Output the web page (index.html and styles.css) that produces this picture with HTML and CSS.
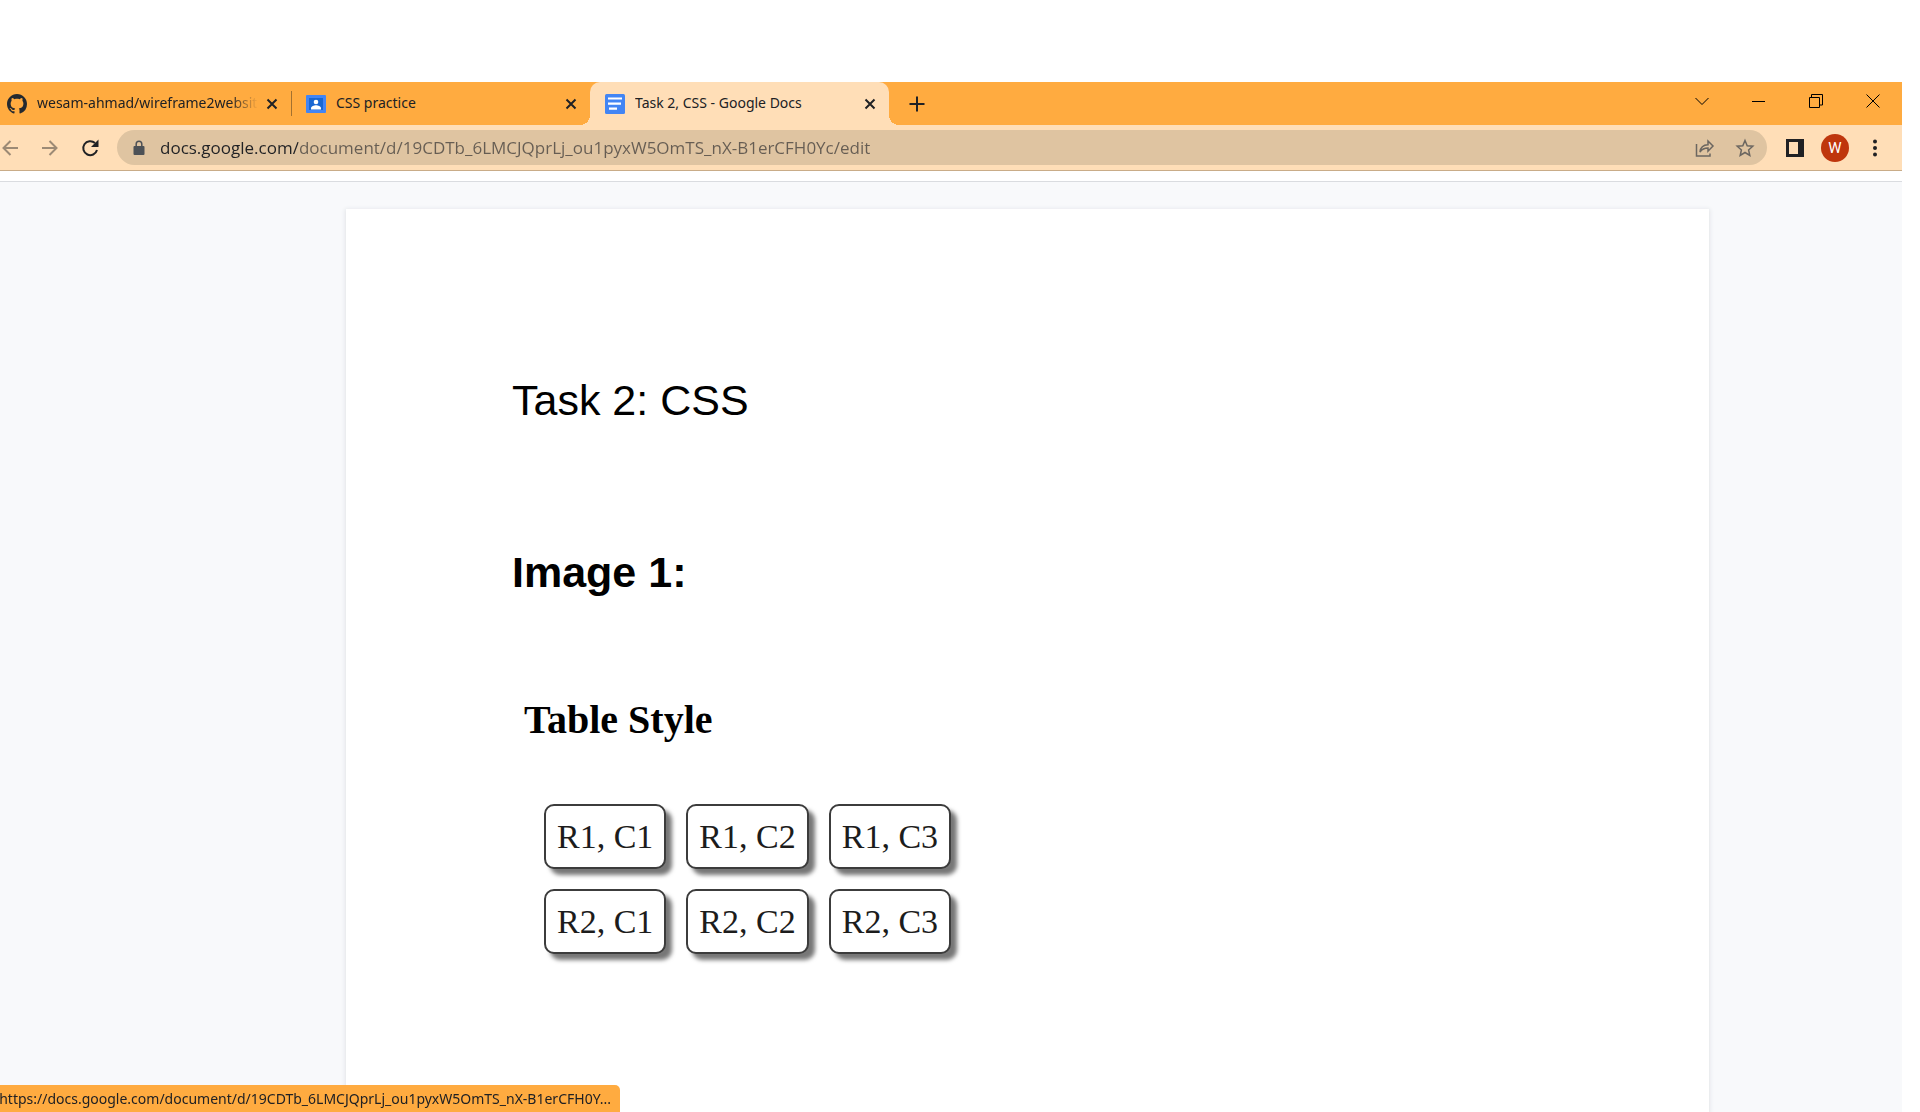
FILE: index.html
```html
<!DOCTYPE html>
<html lang="en">
<head>
<meta charset="utf-8">
<title>Task 2, CSS - Google Docs</title>
<link rel="stylesheet" href="styles.css">
</head>
<body>
<div class="browser">
  <header class="tab-strip">
    <div class="tabs">
      <div class="tab tab-divided">
        <svg class="favicon" viewBox="0 0 16 16" aria-hidden="true"><path fill="#24292f" d="M8 0C3.58 0 0 3.58 0 8c0 3.54 2.29 6.53 5.47 7.59.4.07.55-.17.55-.38 0-.19-.01-.82-.01-1.49-2.01.37-2.53-.49-2.69-.94-.09-.23-.48-.94-.82-1.13-.28-.15-.68-.52-.01-.53.63-.01 1.08.58 1.23.82.72 1.21 1.87.87 2.33.66.07-.52.28-.87.51-1.07-1.78-.2-3.64-.89-3.64-3.95 0-.87.31-1.59.82-2.15-.08-.2-.36-1.02.08-2.12 0 0 .67-.21 2.2.82.64-.18 1.32-.27 2-.27s1.36.09 2 .27c1.53-1.04 2.2-.82 2.2-.82.44 1.1.16 1.92.08 2.12.51.56.82 1.27.82 2.15 0 3.07-1.87 3.75-3.65 3.95.29.25.54.73.54 1.48 0 1.07-.01 1.93-.01 2.2 0 .21.15.46.55.38A8.01 8.01 0 0 0 16 8c0-4.42-3.58-8-8-8z"/></svg>
        <span class="tab-title tab-title-long">wesam-ahmad/wireframe2website</span>
        <button class="tab-close" aria-label="Close tab"><svg width="12" height="12" viewBox="0 0 12 12"><path d="M1.500 1.500l9 9M10.500 1.500l-9 9"/></svg></button>
      </div>
      <div class="tab">
        <svg class="favicon" viewBox="0 0 20 20" aria-hidden="true"><rect y="1" width="20" height="18" rx="1" fill="#4285f4"/><rect x="3" y="4" width="14" height="12" fill="#1967d2"/><circle cx="10" cy="8" r="2.300" fill="#fff"/><path fill="#fff" d="M5 15.500v-1.300c0-1.900 3-2.900 5-2.900s5 1 5 2.900v1.300z"/></svg>
        <span class="tab-title">CSS practice</span>
        <button class="tab-close" aria-label="Close tab"><svg width="12" height="12" viewBox="0 0 12 12"><path d="M1.500 1.500l9 9M10.500 1.500l-9 9"/></svg></button>
      </div>
      <div class="tab tab-active">
        <svg class="favicon" viewBox="0 0 20 20" aria-hidden="true"><rect width="20" height="20" rx="1.500" fill="#4285f4"/><path fill="#fff" d="M3 3.500h14v2H3zM3 8.500h13v2.200H3zM4 13.600h8v2.200H4z"/></svg>
        <span class="tab-title">Task 2, CSS - Google Docs</span>
        <button class="tab-close" aria-label="Close tab"><svg width="12" height="12" viewBox="0 0 12 12"><path d="M1.500 1.500l9 9M10.500 1.500l-9 9"/></svg></button>
      </div>
      <button class="new-tab" aria-label="New tab"><svg width="16" height="16" viewBox="0 0 16 16"><path d="M8 .5v15M.5 8h15"/></svg></button>
    </div>
    <div class="window-controls">
      <button aria-label="Search tabs"><svg width="14" height="14" viewBox="0 0 14 14"><path d="M.5 4l6.500 6.500L13.500 4"/></svg></button>
      <button aria-label="Minimize"><svg width="14" height="14" viewBox="0 0 14 14"><path d="M0 7.500h13"/></svg></button>
      <button aria-label="Restore"><svg width="14" height="14" viewBox="0 0 14 14"><path d="M.5 3.500h10v10H.5zM2.500 3.500v-3h11v10.500h-3"/></svg></button>
      <button aria-label="Close"><svg width="14" height="14" viewBox="0 0 14 14"><path d="M.5.5l13 13M13.500.5L.5 13.500"/></svg></button>
    </div>
  </header>

  <nav class="toolbar">
    <div class="nav-buttons">
      <button class="nav-muted" aria-label="Back"><svg width="16" height="16" viewBox="0 0 16 16"><path d="M16 8H1.500M8.500 1L1.500 8l7 7"/></svg></button>
      <button class="nav-muted" aria-label="Forward"><svg width="16" height="16" viewBox="0 0 16 16"><path d="M0 8h14.500M7.500 1l7 7-7 7"/></svg></button>
      <button aria-label="Reload"><svg width="18" height="18" viewBox="0 0 18 18"><path d="M14 4A7 7 0 1 0 16 11"/><path class="solid" d="M17.500.5v7.500H10z"/></svg></button>
    </div>
    <div class="address-bar">
      <svg class="lock" width="12" height="16" viewBox="0 0 12 16" aria-hidden="true"><rect x=".5" y="6" width="11" height="9" rx="1" fill="#4d5156"/><path d="M3.200 6V4a2.800 2.800 0 0 1 5.600 0v2" fill="none" stroke="#4d5156" stroke-width="1.500"/></svg>
      <input class="url" type="text" aria-label="Address" value="docs.google.com/document/d/19CDTb_6LMCJQprLj_ou1pyxW5OmTS_nX-B1erCFH0Yc/edit">
      <button class="address-action" aria-label="Share this page"><svg width="20" height="20" viewBox="0 0 20 20"><path d="M1.500 6v12h13.500v-2.500M5 14c.5-5 3-7 8-7.200V3l5 5-5 5.200V10c-3.500 0-6 1-8 4z"/></svg></button>
      <button class="address-action" aria-label="Bookmark this tab"><svg width="20" height="20" viewBox="0 0 20 20"><path d="M10 2.500l2.200 5.200 5.600.5-4.200 3.700 1.200 5.500L10 14.500l-4.800 2.900 1.200-5.500-4.200-3.700 5.600-.5z"/></svg></button>
    </div>
    <div class="toolbar-actions">
      <button aria-label="Side panel"><svg width="18" height="18" viewBox="0 0 18 18"><path class="solid" fill-rule="evenodd" d="M0 0h18v18H0zM3 3v12h9V3z"/></svg></button>
      <button class="avatar" aria-label="Profile">W</button>
      <button aria-label="Menu"><svg width="18" height="18" viewBox="0 0 18 18"><g class="solid"><circle cx="9" cy="2.500" r="2"/><circle cx="9" cy="9" r="2"/><circle cx="9" cy="15.500" r="2"/></g></svg></button>
    </div>
  </nav>

  <main class="document">
    <article class="paper">
      <h1 class="doc-title">Task 2: CSS</h1>
      <h2 class="doc-heading">Image 1:</h2>
      <section class="sample">
        <h3 class="sample-title">Table Style</h3>
        <table class="sample-table">
          <tr><td>R1, C1</td><td>R1, C2</td><td>R1, C3</td></tr>
          <tr><td>R2, C1</td><td>R2, C2</td><td>R2, C3</td></tr>
        </table>
      </section>
    </article>
  </main>
</div>
<div class="status-bubble"><span>https://docs.google.com/document/d/19CDTb_6LMCJQprLj_ou1pyxW5OmTS_nX-B1erCFH0Y...</span></div>
</body>
</html>
```
FILE: styles.css
```css
* { box-sizing: border-box; }

body {
  margin: 0;
  background: #fff;
  color: #202124;
  font-family: "Noto Sans", "Segoe UI", sans-serif;
  font-size: 14px;
}

button {
  display: flex;
  align-items: center;
  justify-content: center;
  flex: none;
  padding: 0;
  border: 0;
  background: none;
  color: inherit;
  font: inherit;
}

button svg {
  fill: none;
  stroke: currentColor;
  stroke-width: 2;
}

button svg .solid {
  fill: currentColor;
  stroke: none;
}

.browser {
  display: flex;
  flex-direction: column;
  min-height: 100vh;
  padding: 82px 18px 0 0;
}

/* Tab strip */
.tab-strip {
  display: flex;
  justify-content: space-between;
  height: 43px;
  overflow: hidden;
  background: #ffab40;
}

.tabs {
  display: flex;
  flex: 1;
  min-width: 0;
  margin-left: -8px;
}

.tab {
  position: relative;
  display: flex;
  flex: 0 1 299px;
  align-items: center;
  min-width: 0;
  padding: 0 9px 0 15px;
}

.tab-divided::after {
  content: "";
  position: absolute;
  top: 9px;
  right: -1px;
  width: 1px;
  height: 25px;
  background: #a3712f;
}

.tab-active {
  border-radius: 10px 10px 0 0;
  background: #ffdeb7;
}

.tab-active::before,
.tab-active::after {
  content: "";
  position: absolute;
  bottom: 0;
  width: 10px;
  height: 10px;
}

.tab-active::before {
  right: 100%;
  background: radial-gradient(circle at 0 0, transparent 10px, #ffdeb7 10px);
}

.tab-active::after {
  left: 100%;
  background: radial-gradient(circle at 100% 0, transparent 10px, #ffdeb7 10px);
}

.favicon {
  flex: none;
  width: 20px;
  height: 20px;
}

.tab-title {
  flex: 1;
  min-width: 0;
  margin: 0 4px 0 10px;
  padding-bottom: 2px;
  overflow: hidden;
  line-height: 20px;
  white-space: nowrap;
}

.tab-title-long {
  mask-image: linear-gradient(to left, transparent, #000 28px);
}

.tab-close {
  width: 20px;
  height: 20px;
}

.new-tab {
  width: 56px;
}

.window-controls {
  display: flex;
  align-items: flex-start;
  padding-right: 1px;
}

.window-controls button {
  width: 57px;
  height: 37px;
  color: #000;
}

.window-controls svg { stroke-width: 1; }

/* Toolbar */
.toolbar {
  display: flex;
  align-items: center;
  height: 46px;
  border-bottom: 1px solid #c9ac88;
  background: #ffdeb7;
}

.nav-buttons {
  display: flex;
  margin-left: -10px;
  padding-right: 7px;
}

.nav-buttons button {
  width: 40px;
  height: 35px;
}

.nav-buttons .nav-muted { color: #9c8a75; }

.address-bar {
  display: flex;
  flex: 1;
  align-items: center;
  height: 35px;
  padding: 0 2px 0 16px;
  border-radius: 18px;
  background: #dfc4a1;
}

.lock { flex: none; }

.url {
  flex: 1;
  min-width: 0;
  margin-left: 15px;
  padding: 0;
  border: 0;
  background: linear-gradient(to right, #202124 138px, #665d53 138px);
  background-clip: text;
  -webkit-text-fill-color: transparent;
  font-family: "Open Sans", "Segoe UI", sans-serif;
  font-size: 17px;
  line-height: 24px;
}

.address-action {
  width: 40px;
  height: 32px;
  color: #6b6660;
}

.address-action svg { stroke-width: 1.5; }

.toolbar-actions {
  display: flex;
  align-items: center;
  padding-right: 7px;
}

.toolbar-actions button {
  width: 40px;
  height: 28px;
}

.toolbar-actions button:first-child { margin-left: 8px; }

.toolbar-actions .avatar {
  width: 28px;
  margin: 0 6px;
  border-radius: 50%;
  background: #bf360c;
  color: #fff;
  font-family: Roboto, sans-serif;
  font-size: 15px;
}

/* Document */
.document {
  display: flex;
  flex: 1;
  margin-top: 10px;
  padding: 27px 193px 0 346px;
  border-top: 1px solid #dadce0;
  background: #f8f9fb;
}

.paper {
  flex: 1;
  min-width: 0;
  padding: 166px 166px 0;
  background: #fff;
  box-shadow: 0 1px 4px 1px #e3e5e8;
  color: #000;
}

.doc-title,
.doc-heading {
  margin: 0;
  font-family: "Liberation Sans", Arial, sans-serif;
  font-size: 43px;
  line-height: 50px;
}

.doc-title { font-weight: 400; }

.doc-heading { margin-top: 122px; }

.sample {
  margin-top: 100px;
  padding-left: 12px;
  font-family: "Liberation Serif", "Times New Roman", serif;
}

.sample-title {
  margin: 0 0 41px;
  font-size: 40px;
  line-height: 46px;
}

.sample-table {
  border-spacing: 20px;
  border-collapse: separate;
  color: #1c1c1c;
}

.sample-table td {
  min-width: 122px;
  height: 65px;
  padding: 0 11px;
  border: 2px solid #3c3c3c;
  border-radius: 10px;
  background: #fff;
  box-shadow: 6px 6px 4px #777;
  font-size: 34px;
  line-height: 40px;
  text-align: center;
}

/* Link preview at the bottom of the window */
.status-bubble {
  position: fixed;
  bottom: 0;
  left: 0;
  display: flex;
  justify-content: flex-end;
  width: 620px;
  height: 27px;
  padding-right: 9px;
  overflow: hidden;
  border-radius: 0 5px 0 0;
  background: #ffab40;
  line-height: 27px;
  white-space: nowrap;
}
```
